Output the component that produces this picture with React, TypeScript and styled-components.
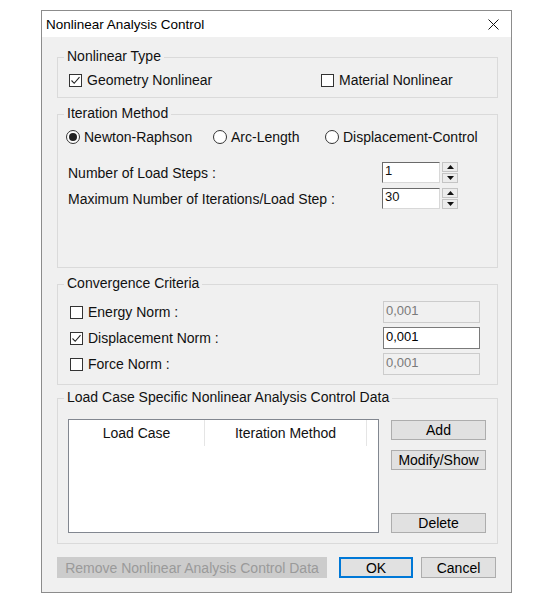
import styled, { createGlobalStyle } from "styled-components";

const GlobalStyle = createGlobalStyle`
    html, body {
        margin: 0;
        padding: 0;
        background: #ffffff;
    }
    body {
        font-family: "Liberation Sans", Arial, sans-serif;
        font-size: 14px;
        color: #111111;
    }
`;

const Page = styled.div`
    padding: 10px 0 0 41px;
`;

const Window = styled.div`
    width: 471px;
    height: 583px;
    box-sizing: border-box;
    border: 1px solid #8c8c8c;
    background: #f0f0f0;
    display: flex;
    flex-direction: column;
`;

const TitleBar = styled.div`
    height: 26px;
    background: #ffffff;
    display: flex;
    align-items: center;
    justify-content: space-between;
    padding: 0 12px 0 4px;
    flex-shrink: 0;
`;

const Title = styled.span`
    font-size: 13.5px;
    color: #000000;
`;

const Body = styled.div`
    padding: 20px 13px 0 15px;
    display: flex;
    flex-direction: column;
`;

const Group = styled.div<{ $h: number; $mt?: number }>`
    box-sizing: border-box;
    height: ${(p) => p.$h}px;
    margin-top: ${(p) => p.$mt ?? 0}px;
    border: 1px solid #dadada;
    display: flex;
    flex-direction: column;
`;

const Legend = styled.div`
    margin: -10px 0 0 6px;
    padding: 0 3px;
    width: fit-content;
    line-height: 16px;
    background: #f0f0f0;
`;

const OptionRow = styled.div<{ $cols: string; $pl: number }>`
    display: grid;
    grid-template-columns: ${(p) => p.$cols};
    padding-left: ${(p) => p.$pl}px;
    margin-top: 7px;
    height: 18px;
    align-items: center;
`;

const Option = styled.label`
    display: flex;
    align-items: center;
    white-space: nowrap;
    line-height: 18px;
`;

const Box = styled.span`
    width: 13px;
    height: 13px;
    box-sizing: border-box;
    border: 1px solid #333333;
    background: #ffffff;
    margin-right: 5px;
    display: inline-flex;
    align-items: center;
    justify-content: center;
    flex-shrink: 0;
`;

const Circle = styled.span`
    width: 14px;
    height: 14px;
    box-sizing: border-box;
    border: 1px solid #333333;
    border-radius: 50%;
    background: #ffffff;
    margin-right: 4px;
    display: inline-flex;
    align-items: center;
    justify-content: center;
    flex-shrink: 0;
`;

const Dot = styled.span`
    width: 8px;
    height: 8px;
    border-radius: 50%;
    background: #222222;
`;

const FieldList = styled.div<{ $mt: number; $gap: number }>`
    display: flex;
    flex-direction: column;
    gap: ${(p) => p.$gap}px;
    margin-top: ${(p) => p.$mt}px;
`;

const FieldRow = styled.div<{ $label: number; $pl: number }>`
    display: grid;
    grid-template-columns: ${(p) => p.$label}px auto;
    padding-left: ${(p) => p.$pl}px;
    align-items: center;
`;

const Spin = styled.div`
    display: flex;
    align-items: center;
    gap: 2px;
`;

const NumInput = styled.div`
    width: 58px;
    height: 21px;
    box-sizing: border-box;
    background: #ffffff;
    border-top: 1px solid #6a6a6a;
    border-left: 1px solid #6a6a6a;
    border-right: 1px solid #d8d8d8;
    border-bottom: 1px solid #d8d8d8;
    padding: 0 2px;
    line-height: 16px;
    font-size: 13px;
`;

const SpinButtons = styled.div`
    display: flex;
    flex-direction: column;
    gap: 1px;
`;

const SpinButton = styled.div`
    width: 16px;
    height: 10px;
    box-sizing: border-box;
    border: 1px solid #c4c4c4;
    background: #ececec;
    display: flex;
    align-items: center;
    justify-content: center;
`;

const TextInput = styled.div<{ $disabled?: boolean }>`
    width: 97px;
    height: 22px;
    box-sizing: border-box;
    border: 1px solid ${(p) => (p.$disabled ? "#cccccc" : "#7a7a7a")};
    background: ${(p) => (p.$disabled ? "#f0f0f0" : "#ffffff")};
    color: ${(p) => (p.$disabled ? "#7a7a7a" : "#000000")};
    padding: 0 2px;
    line-height: 18px;
    font-size: 13px;
`;

const LoadCaseArea = styled.div`
    display: flex;
    margin: 14px 0 0 10px;
    gap: 12px;
`;

const Table = styled.div`
    width: 311px;
    height: 114px;
    box-sizing: border-box;
    border: 1px solid #828790;
    background: #ffffff;
`;

const TableHead = styled.div`
    display: grid;
    grid-template-columns: 136px 162px;
    height: 26px;
`;

const HeadCell = styled.div`
    border-right: 1px solid #e5e5e5;
    display: flex;
    align-items: center;
    justify-content: center;
`;

const SideButtons = styled.div`
    display: flex;
    flex-direction: column;
    padding-top: 1px;
    gap: 10px;
`;

const Button = styled.div<{ $w: number; $h?: number; $disabled?: boolean; $default?: boolean }>`
    width: ${(p) => p.$w}px;
    height: ${(p) => p.$h ?? 20}px;
    box-sizing: border-box;
    background: ${(p) => (p.$disabled ? "#cccccc" : "#e1e1e1")};
    color: ${(p) => (p.$disabled ? "#9a9a9a" : "#000000")};
    border: 1px solid ${(p) => (p.$default ? "#0078d7" : p.$disabled ? "#cccccc" : "#adadad")};
    box-shadow: ${(p) => (p.$default ? "inset 0 0 0 1px #0078d7" : "none")};
    display: flex;
    align-items: center;
    justify-content: center;
    white-space: nowrap;
`;

const Spacer = styled.div`
    flex: 1;
`;

const Footer = styled.div`
    display: flex;
    margin-top: 13px;
`;

const Check = ({ checked, label }: { checked?: boolean; label: string }) => (
    <Option>
        <Box>
            {checked && (
                <svg width="11" height="11" viewBox="0 0 11 11">
                    <polyline points="1.5,5.5 4.2,8.3 9.5,2.2" fill="none" stroke="#222" strokeWidth="1.1" />
                </svg>
            )}
        </Box>
        {label}
    </Option>
);

const Radio = ({ checked, label }: { checked?: boolean; label: string }) => (
    <Option>
        <Circle>{checked && <Dot />}</Circle>
        {label}
    </Option>
);

const Arrow = ({ up }: { up?: boolean }) => (
    <svg width="7" height="4" viewBox="0 0 7 4">
        <polygon points={up ? "0,4 7,4 3.5,0" : "0,0 7,0 3.5,4"} fill="#111" />
    </svg>
);

const Spinner = ({ value }: { value: string }) => (
    <Spin>
        <NumInput>{value}</NumInput>
        <SpinButtons>
            <SpinButton>
                <Arrow up />
            </SpinButton>
            <SpinButton>
                <Arrow />
            </SpinButton>
        </SpinButtons>
    </Spin>
);

const App = () => {
    return (
        <Page>
            <GlobalStyle />
            <Window>
                <TitleBar>
                    <Title>Nonlinear Analysis Control</Title>
                    <svg width="11" height="11" viewBox="0 0 11 11">
                        <path d="M0.5 0.5 L10.5 10.5 M10.5 0.5 L0.5 10.5" stroke="#111" strokeWidth="1" />
                    </svg>
                </TitleBar>
                <Body>
                    <Group $h={41}>
                        <Legend>Nonlinear Type</Legend>
                        <OptionRow $cols="252px auto" $pl={11}>
                            <Check checked label="Geometry Nonlinear" />
                            <Check label="Material Nonlinear" />
                        </OptionRow>
                    </Group>

                    <Group $h={154} $mt={16}>
                        <Legend>Iteration Method</Legend>
                        <OptionRow $cols="147px 112px auto" $pl={8}>
                            <Radio checked label="Newton-Raphson" />
                            <Radio label="Arc-Length" />
                            <Radio label="Displacement-Control" />
                        </OptionRow>
                        <FieldList $mt={16} $gap={5}>
                            <FieldRow $label={314} $pl={10}>
                                <span>Number of Load Steps :</span>
                                <Spinner value="1" />
                            </FieldRow>
                            <FieldRow $label={314} $pl={10}>
                                <span>Maximum Number of Iterations/Load Step :</span>
                                <Spinner value="30" />
                            </FieldRow>
                        </FieldList>
                    </Group>

                    <Group $h={101} $mt={16}>
                        <Legend>Convergence Criteria</Legend>
                        <FieldList $mt={10} $gap={4}>
                            <FieldRow $label={313} $pl={12}>
                                <Check label="Energy Norm :" />
                                <TextInput $disabled>0,001</TextInput>
                            </FieldRow>
                            <FieldRow $label={313} $pl={12}>
                                <Check checked label="Displacement Norm :" />
                                <TextInput>0,001</TextInput>
                            </FieldRow>
                            <FieldRow $label={313} $pl={12}>
                                <Check label="Force Norm :" />
                                <TextInput $disabled>0,001</TextInput>
                            </FieldRow>
                        </FieldList>
                    </Group>

                    <Group $h={146} $mt={13}>
                        <Legend>Load Case Specific Nonlinear Analysis Control Data</Legend>
                        <LoadCaseArea>
                            <Table>
                                <TableHead>
                                    <HeadCell>Load Case</HeadCell>
                                    <HeadCell>Iteration Method</HeadCell>
                                </TableHead>
                            </Table>
                            <SideButtons>
                                <Button $w={95}>Add</Button>
                                <Button $w={95}>Modify/Show</Button>
                                <Spacer />
                                <Button $w={95}>Delete</Button>
                            </SideButtons>
                        </LoadCaseArea>
                    </Group>

                    <Footer>
                        <Button $w={270} $h={21} $disabled>
                            Remove Nonlinear Analysis Control Data
                        </Button>
                        <Button $w={74} $h={21} $default style={{ marginLeft: 12 }}>
                            OK
                        </Button>
                        <Button $w={75} $h={21} style={{ marginLeft: 8 }}>
                            Cancel
                        </Button>
                    </Footer>
                </Body>
            </Window>
        </Page>
    );
};

export default App;
